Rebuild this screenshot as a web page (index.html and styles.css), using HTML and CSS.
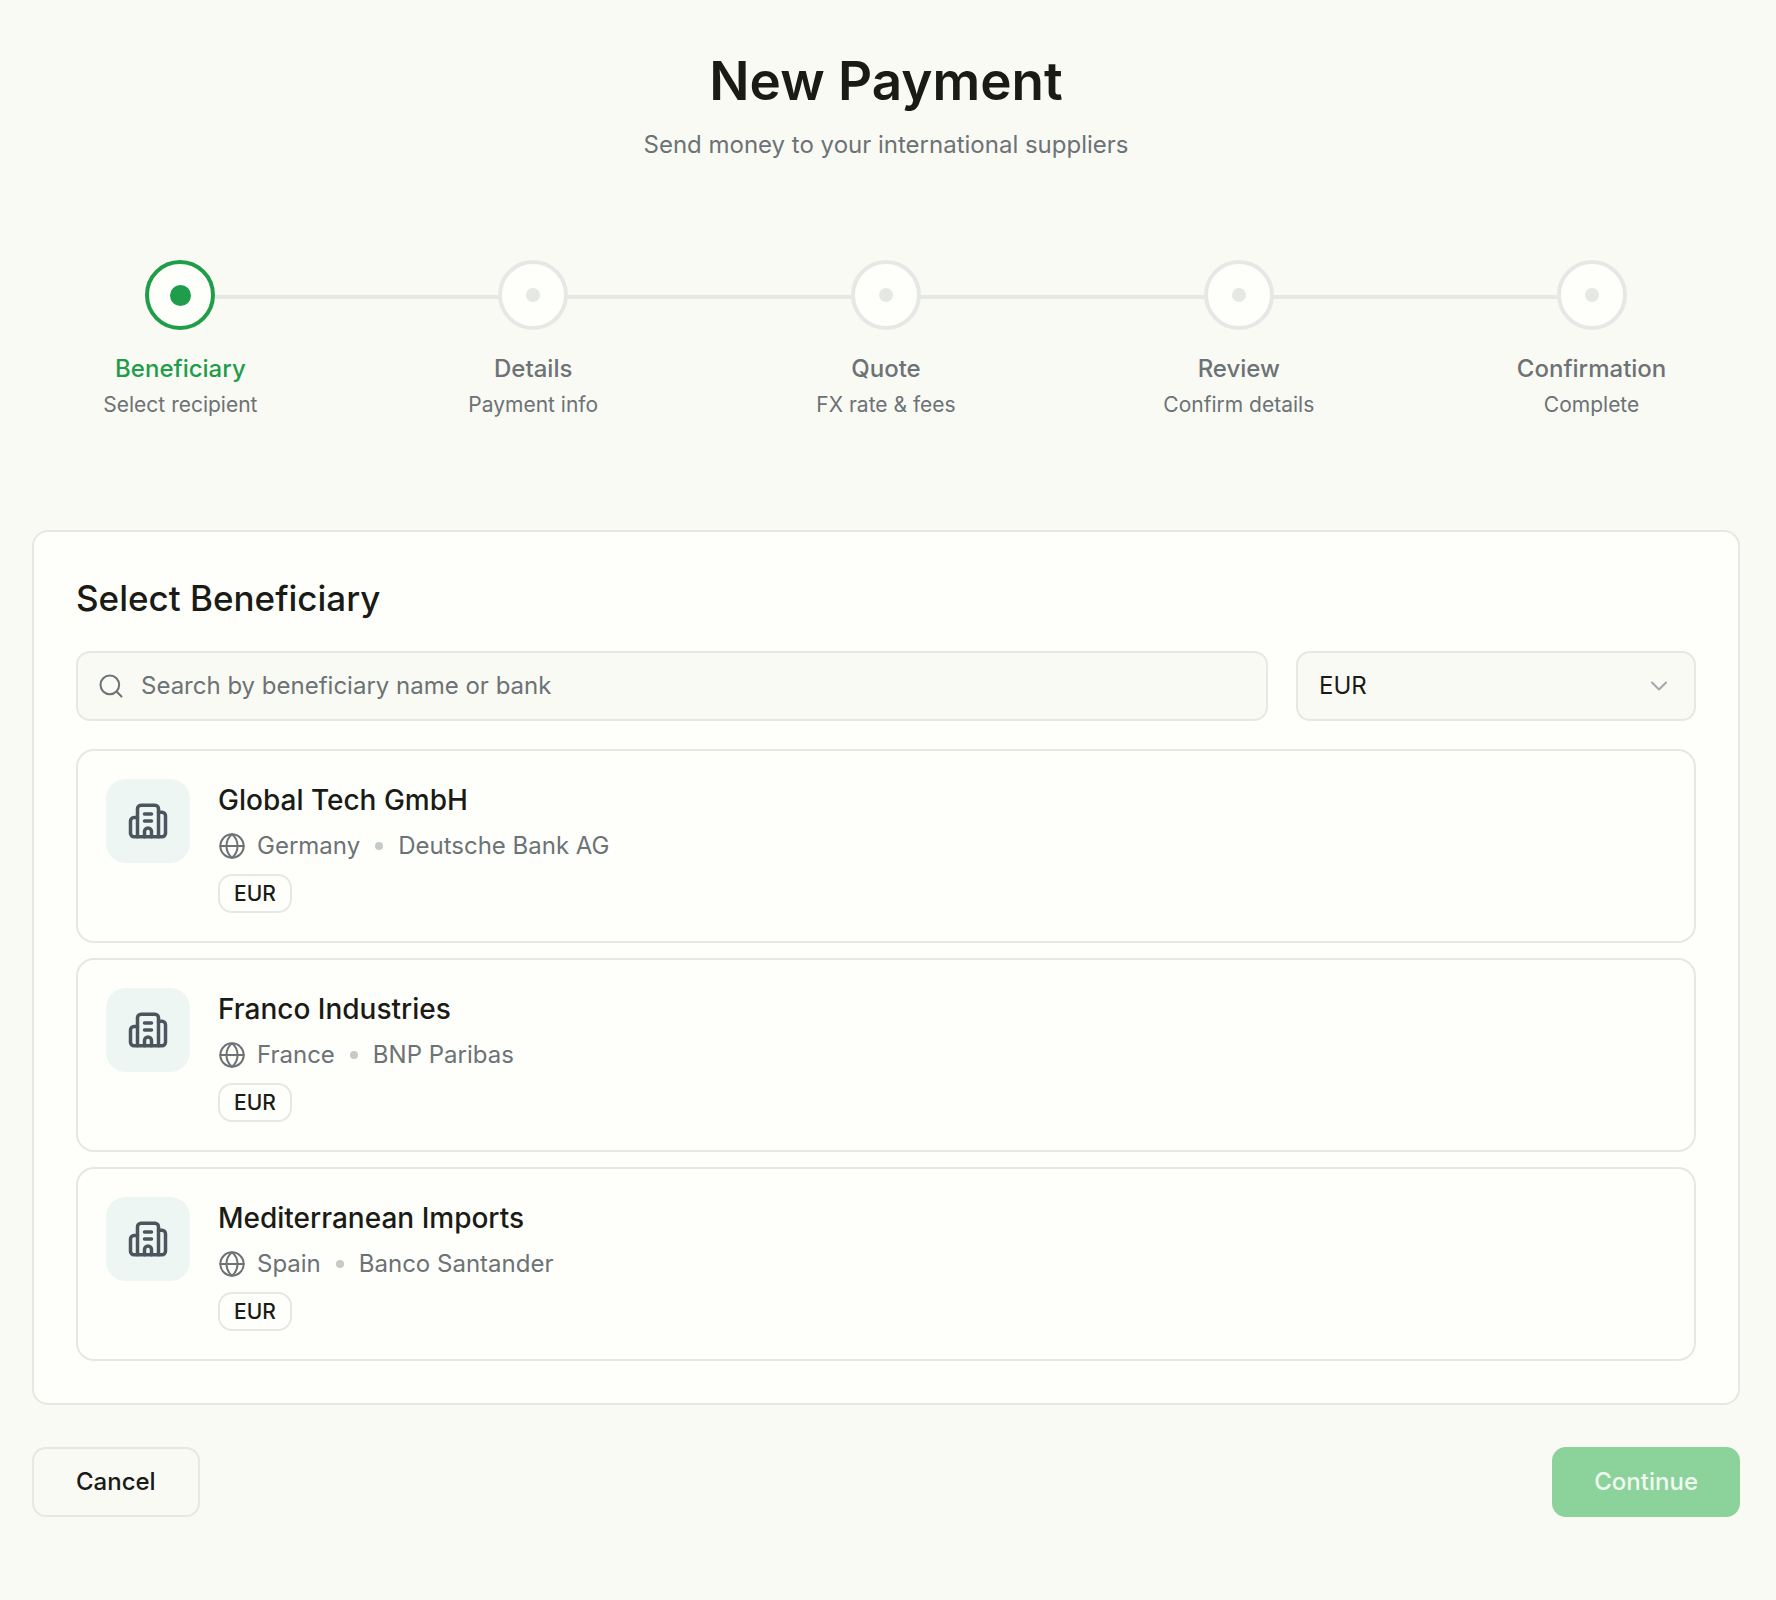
FILE: index.html
```html
<!DOCTYPE html>
<html lang="en">
<head>
<meta charset="utf-8">
<meta name="viewport" content="width=device-width, initial-scale=1">
<title>New Payment</title>
<link rel="stylesheet" href="styles.css">
</head>
<body>
<svg class="sprite" aria-hidden="true">
  <symbol id="icon-building" viewBox="0 0 24 24">
    <path d="M10 12h4M10 8h4M14 21v-3a2 2 0 0 0-4 0v3"/>
    <path d="M6 10H4a2 2 0 0 0-2 2v7a2 2 0 0 0 2 2h16a2 2 0 0 0 2-2V9a2 2 0 0 0-2-2h-2"/>
    <path d="M6 21V5a2 2 0 0 1 2-2h8a2 2 0 0 1 2 2v16"/>
  </symbol>
  <symbol id="icon-globe" viewBox="0 0 24 24">
    <circle cx="12" cy="12" r="10"/>
    <path d="M12 2a12.9 12.9 0 0 0 0 20 12.9 12.9 0 0 0 0-20M2 12h20"/>
  </symbol>
</svg>
<main class="page">
  <header class="page-header">
    <h1 class="page-title">New Payment</h1>
    <p class="page-subtitle">Send money to your international suppliers</p>
  </header>

  <ol class="stepper">
    <li class="step step-active" aria-current="step">
      <span class="step-marker"></span>
      <span class="step-name">Beneficiary</span>
      <span class="step-hint">Select recipient</span>
    </li>
    <li class="step">
      <span class="step-marker"></span>
      <span class="step-name">Details</span>
      <span class="step-hint">Payment info</span>
    </li>
    <li class="step">
      <span class="step-marker"></span>
      <span class="step-name">Quote</span>
      <span class="step-hint">FX rate &amp; fees</span>
    </li>
    <li class="step">
      <span class="step-marker"></span>
      <span class="step-name">Review</span>
      <span class="step-hint">Confirm details</span>
    </li>
    <li class="step">
      <span class="step-marker"></span>
      <span class="step-name">Confirmation</span>
      <span class="step-hint">Complete</span>
    </li>
  </ol>

  <form class="payment-form">
    <section class="card">
      <h2 class="card-title">Select Beneficiary</h2>
      <div class="filters">
        <label class="search">
          <svg class="icon icon-small" viewBox="0 0 24 24" aria-hidden="true"><circle cx="11" cy="11" r="8"/><path d="m21 21-4.3-4.3"/></svg>
          <input class="search-input" type="search" aria-label="Search beneficiaries" placeholder="Search by beneficiary name or bank">
        </label>
        <div class="currency">
          <select class="currency-select" aria-label="Currency">
            <option>EUR</option>
          </select>
          <svg class="icon icon-small currency-chevron" viewBox="0 0 24 24" aria-hidden="true"><path d="m6 9 6 6 6-6"/></svg>
        </div>
      </div>

      <ul class="beneficiaries">
        <li class="beneficiary">
          <span class="tile"><svg class="icon icon-large" aria-hidden="true"><use href="#icon-building"/></svg></span>
          <div class="beneficiary-body">
            <h3 class="beneficiary-name">Global Tech GmbH</h3>
            <p class="beneficiary-meta">
              <svg class="icon icon-small" aria-hidden="true"><use href="#icon-globe"/></svg>
              <span>Germany</span><span class="dot"></span><span>Deutsche Bank AG</span>
            </p>
            <span class="badge">EUR</span>
          </div>
        </li>
        <li class="beneficiary">
          <span class="tile"><svg class="icon icon-large" aria-hidden="true"><use href="#icon-building"/></svg></span>
          <div class="beneficiary-body">
            <h3 class="beneficiary-name">Franco Industries</h3>
            <p class="beneficiary-meta">
              <svg class="icon icon-small" aria-hidden="true"><use href="#icon-globe"/></svg>
              <span>France</span><span class="dot"></span><span>BNP Paribas</span>
            </p>
            <span class="badge">EUR</span>
          </div>
        </li>
        <li class="beneficiary">
          <span class="tile"><svg class="icon icon-large" aria-hidden="true"><use href="#icon-building"/></svg></span>
          <div class="beneficiary-body">
            <h3 class="beneficiary-name">Mediterranean Imports</h3>
            <p class="beneficiary-meta">
              <svg class="icon icon-small" aria-hidden="true"><use href="#icon-globe"/></svg>
              <span>Spain</span><span class="dot"></span><span>Banco Santander</span>
            </p>
            <span class="badge">EUR</span>
          </div>
        </li>
      </ul>
    </section>

    <div class="actions">
      <button class="button button-outline" type="button">Cancel</button>
      <button class="button button-primary" type="submit" disabled>Continue</button>
    </div>
  </form>
</main>
</body>
</html>
```
FILE: styles.css
```css
:root {
  --background: #f9faf3;
  --surface: #fefffb;
  --border: #e5e8e5;
  --text: #1a1b17;
  --muted: #6c7276;
  --green: #1f9d4b;
}

* {
  box-sizing: border-box;
}

body,
h1,
h2,
h3,
p,
ol,
ul {
  margin: 0;
  padding: 0;
  list-style: none;
}

body {
  background: var(--background);
  color: var(--text);
  font-family: Inter, "Liberation Sans", sans-serif;
  font-size: 24px;
  line-height: 36px;
}

input,
select,
button {
  font: inherit;
  color: inherit;
}

.sprite {
  display: none;
}

.icon {
  flex: none;
  fill: none;
  stroke: currentColor;
  stroke-width: 2;
  stroke-linecap: round;
  stroke-linejoin: round;
}

.icon-small {
  width: 28px;
  height: 28px;
  stroke-width: 1.75;
}

.icon-large {
  width: 42px;
  height: 42px;
}

.page {
  padding: 49px 8px 84px 4px;
}

.page-header {
  display: flex;
  flex-direction: column;
  align-items: center;
  gap: 14px;
}

.page-title {
  font-size: 53px;
  line-height: 64px;
  font-weight: 600;
}

.page-subtitle {
  color: var(--muted);
}

.stepper {
  display: grid;
  grid-template-columns: repeat(5, 1fr);
  margin-top: 97px;
}

.step {
  position: relative;
  display: flex;
  flex-direction: column;
  align-items: center;
  color: var(--muted);
}

.step + .step::before {
  content: "";
  position: absolute;
  top: 35px;
  right: 50%;
  width: 100%;
  height: 4px;
  background: var(--border);
}

.step-marker {
  z-index: 1;
  display: grid;
  place-items: center;
  width: 70px;
  height: 70px;
  margin-bottom: 21px;
  border: 4px solid var(--border);
  border-radius: 50%;
  background: var(--surface);
}

.step-marker::after {
  content: "";
  width: 14px;
  height: 14px;
  border-radius: 50%;
  background: var(--border);
}

.step-name {
  font-weight: 500;
}

.step-hint {
  font-size: 21px;
}

.step-active .step-marker {
  border-color: var(--green);
}

.step-active .step-marker::after {
  width: 21px;
  height: 21px;
  background: var(--green);
}

.step-active .step-name {
  color: var(--green);
}

.payment-form {
  margin-top: 107px;
  padding: 0 28px;
}

.card {
  padding: 42px;
  border: 2px solid var(--border);
  border-radius: 16px;
  background: var(--surface);
}

.card-title {
  margin-bottom: 28px;
  font-size: 35px;
  line-height: 49px;
  font-weight: 500;
}

.filters {
  display: flex;
  gap: 28px;
  margin-bottom: 28px;
}

.search {
  display: flex;
  flex: 1;
  align-items: center;
  gap: 16px;
  height: 70px;
  padding: 0 19px;
  border: 2px solid var(--border);
  border-radius: 14px;
  background: var(--background);
  color: var(--muted);
}

.search-input {
  flex: 1;
  min-width: 0;
  padding: 0;
  border: 0;
  outline: 0;
  background: none;
  color: var(--text);
}

.search-input::placeholder {
  color: var(--muted);
  opacity: 1;
}

.currency {
  display: grid;
  align-items: center;
  width: 400px;
}

.currency-select {
  grid-area: 1 / 1;
  width: 100%;
  height: 70px;
  padding: 0 21px;
  border: 2px solid var(--border);
  border-radius: 14px;
  background: var(--background);
  appearance: none;
}

.currency-chevron {
  grid-area: 1 / 1;
  justify-self: end;
  margin-right: 23px;
  color: #a3a8aa;
  pointer-events: none;
}

.beneficiaries {
  display: grid;
  gap: 15px;
}

.beneficiary {
  display: flex;
  gap: 28px;
  padding: 28px;
  border: 2px solid var(--border);
  border-radius: 18px;
}

.tile {
  display: grid;
  place-items: center;
  flex: none;
  width: 84px;
  height: 84px;
  border-radius: 20px;
  background: #eef6f3;
  color: #4b555d;
}

.beneficiary-name {
  font-size: 28px;
  line-height: 42px;
  font-weight: 500;
}

.beneficiary-meta {
  display: flex;
  align-items: center;
  gap: 11px;
  margin: 7px 0 10px;
  color: var(--muted);
}

.dot {
  width: 8px;
  height: 8px;
  margin: 0 4px;
  border-radius: 50%;
  background: #c5cbca;
}

.badge {
  display: block;
  width: fit-content;
  padding: 0 14px;
  border: 2px solid var(--border);
  border-radius: 14px;
  font-size: 21px;
  line-height: 35px;
  font-weight: 500;
}

.actions {
  display: flex;
  justify-content: space-between;
  margin-top: 42px;
}

.button {
  height: 70px;
  padding: 0 42px;
  border: 2px solid var(--border);
  border-radius: 14px;
  background: none;
  font-weight: 500;
}

.button-primary {
  border: 0;
  background: #8cd29b;
  color: #f0faf1;
}
```
